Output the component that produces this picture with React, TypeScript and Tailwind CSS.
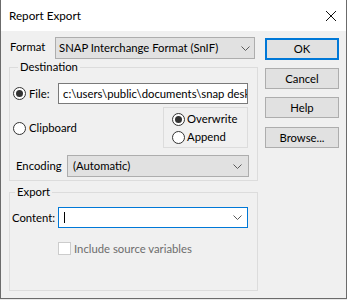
function Chevron() {
  return (
    <svg width="9" height="5" viewBox="0 0 9 5" className="shrink-0">
      <polyline points="0.5,0.5 4.5,4.5 8.5,0.5" fill="none" stroke="#5a5a5a" strokeWidth="1" />
    </svg>
  );
}

function Radio({ checked }: { checked?: boolean }) {
  return (
    <span className="w-[13px] h-[13px] rounded-full border border-[#333333] bg-white flex items-center justify-center shrink-0">
      {checked && <span className="w-[7px] h-[7px] rounded-full bg-[#333333]" />}
    </span>
  );
}

function Button({ label, focused, className }: { label: string; focused?: boolean; className?: string }) {
  return (
    <div
      className={
        "w-[74px] h-[21px] flex items-center justify-center bg-[#e1e1e1] " +
        (focused ? "border-2 border-[#0078d7] " : "border border-[#adadad] ") +
        (className ?? "")
      }
    >
      {label}
    </div>
  );
}

export default function App() {
  return (
    <div
      className="w-[347px] h-[300px] bg-[#e9e9e9] text-[11.3px] leading-[16px] text-black"
      style={{ fontFamily: "Lato, 'Liberation Sans', sans-serif" }}
    >
      <div className="w-[347px] h-[299px] border-x border-b border-[#6b6b6b] bg-[#f0f0f0] flex flex-col">
        {/* Title bar */}
        <div className="h-[31px] bg-white flex items-start justify-between pl-[8px] pr-[10px] pt-[7px] shrink-0">
          <span className="text-[11.7px]">Report Export</span>
          <svg width="10" height="10" viewBox="0 0 10 10" className="mt-[4px]">
            <line x1="0" y1="0" x2="10" y2="10" stroke="#111" strokeWidth="1" />
            <line x1="10" y1="0" x2="0" y2="10" stroke="#111" strokeWidth="1" />
          </svg>
        </div>

        {/* Body */}
        <div className="flex items-start pl-[8px]">
          {/* Left column */}
          <div className="w-[249px] flex flex-col pt-[6px]">
            {/* Format row */}
            <div className="flex items-start h-[22px]">
              <span className="w-[46px] pl-[1px] mt-[2px]">Format</span>
              <div className="w-[200px] h-[22px] bg-[#e1e1e1] border border-[#adadad] flex items-center justify-between pl-[3px] pr-[4px]">
                <span className="whitespace-nowrap">SNAP Interchange Format (SnIF)</span>
                <Chevron />
              </div>
            </div>

            {/* Destination */}
            <fieldset className="border border-[#dcdcdc] h-[122px] pl-[3px]">
              <legend className="ml-[5px] px-[2px]">Destination</legend>
              <div className="flex items-center h-[21px] mt-[8px]">
                <div className="w-[45px] flex items-center">
                  <Radio checked />
                  <span className="ml-[3px]">File:</span>
                </div>
                <div className="w-[190px] h-[21px] bg-white border border-[#7a7a7a] pl-[4px] overflow-hidden flex items-center">
                  <span className="whitespace-nowrap">c:\users\public\documents\snap desktop\export</span>
                </div>
              </div>
              <div className="flex items-start mt-[3px]">
                <div className="w-[150px] h-[16px] flex items-center mt-[13px]">
                  <Radio />
                  <span className="ml-[3px]">Clipboard</span>
                </div>
                <div className="w-[85px] h-[41px] border border-[#dcdcdc] pl-[8px] pt-[3px] flex flex-col gap-[2px]">
                  <div className="h-[16px] flex items-center">
                    <Radio checked />
                    <span className="ml-[2px]">Overwrite</span>
                  </div>
                  <div className="h-[16px] flex items-center">
                    <Radio />
                    <span className="ml-[2px]">Append</span>
                  </div>
                </div>
              </div>
              <div className="flex items-center mt-[7px] h-[22px]">
                <span className="w-[54px] pl-[3px]">Encoding</span>
                <div className="w-[182px] h-[22px] bg-[#e1e1e1] border border-[#adadad] flex items-center justify-between pl-[5px] pr-[6px]">
                  <span>(Automatic)</span>
                  <Chevron />
                </div>
              </div>
            </fieldset>

            {/* Export */}
            <fieldset className="border border-[#dcdcdc] h-[107px] mt-[3px]">
              <legend className="ml-[5px] px-[2px]">Export</legend>
              <div className="flex items-center h-[21px] mt-[7px]">
                <span className="w-[48px] pl-[2px]">Content:</span>
                <div className="w-[190px] h-[21px] bg-white border border-[#0078d7] flex items-center justify-between pl-[5px] pr-[5px]">
                  <span className="w-[1px] h-[11px] bg-black" />
                  <Chevron />
                </div>
              </div>
              <div className="flex items-center h-[13px] mt-[14px] pl-[48px]">
                <span className="w-[13px] h-[13px] border border-[#cccccc] bg-white shrink-0" />
                <span className="ml-[3px] text-[#6d6d6d]">Include source variables</span>
              </div>
            </fieldset>
          </div>

          {/* Right column buttons */}
          <div className="ml-[7px] pt-[7px] flex flex-col">
            <Button label="OK" focused className="h-[22px]" />
            <Button label="Cancel" className="mt-[8px]" />
            <Button label="Help" className="mt-[8px]" />
            <Button label="Browse..." className="mt-[9px]" />
          </div>
        </div>
      </div>
    </div>
  );
}
